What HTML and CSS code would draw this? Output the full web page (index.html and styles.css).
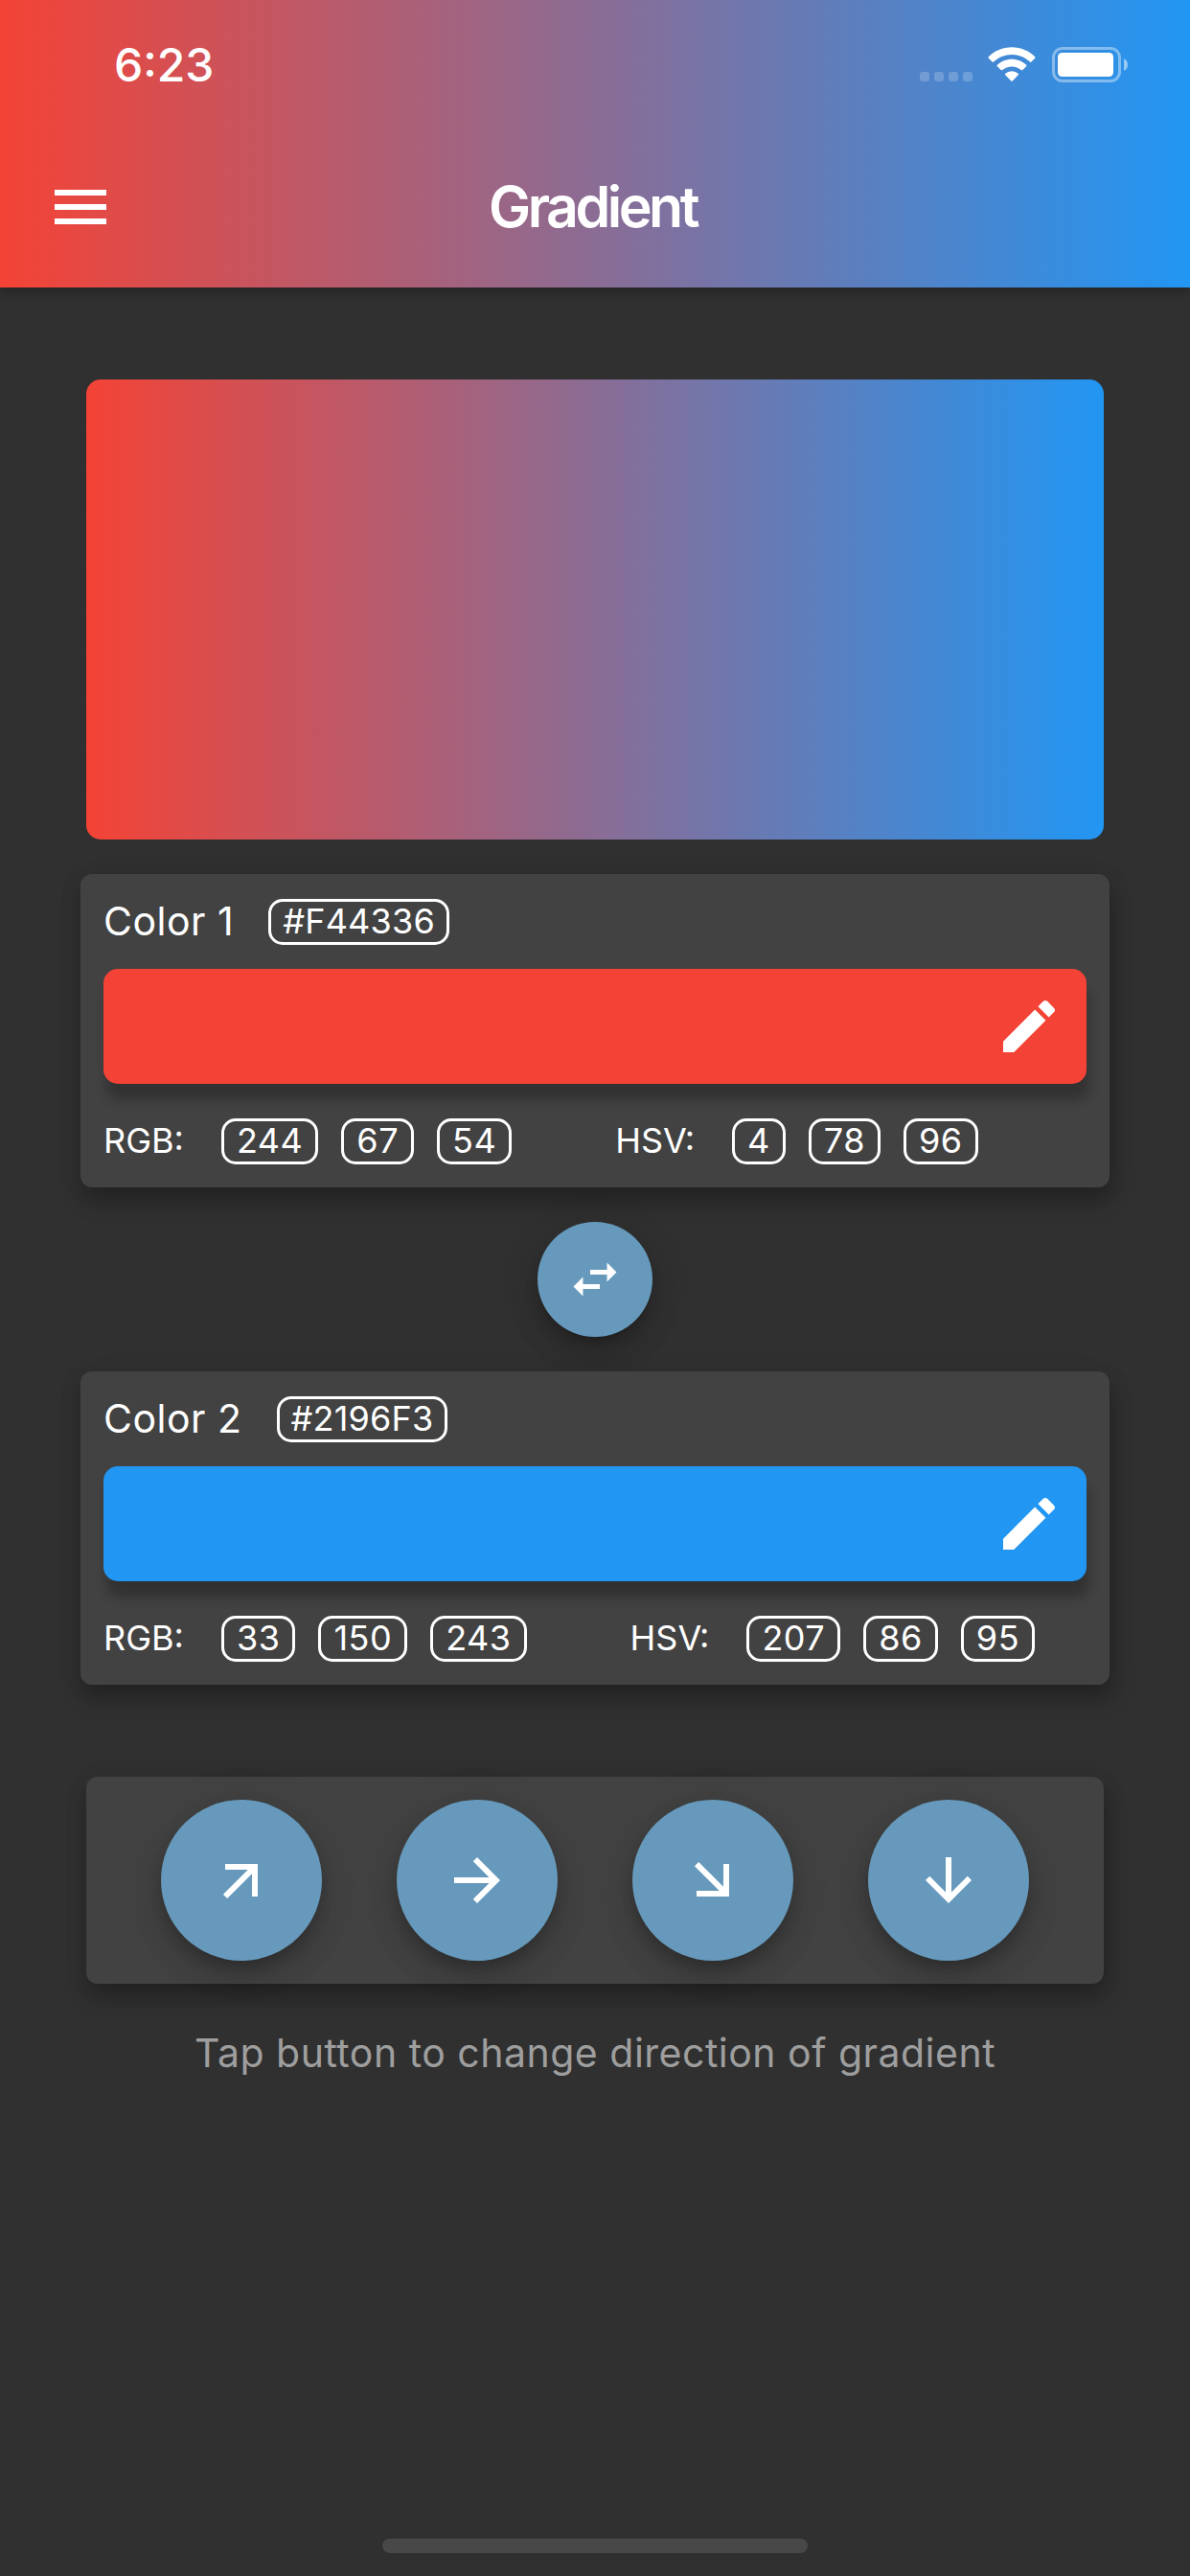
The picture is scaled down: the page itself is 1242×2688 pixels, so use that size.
FILE: index.html
```html
<!DOCTYPE html>
<html lang="en">
<head>
<meta charset="utf-8">
<title>Gradient</title>
<link rel="stylesheet" href="styles.css">
</head>
<body>
<div class="screen">
  <header class="app-header">
    <div class="status-bar">
      <span class="clock">6:23</span>
      <div class="status-icons">
        <div class="signal"><i></i><i></i><i></i><i></i></div>
        <svg class="wifi" viewBox="0 0 50 37" fill="#fff">
          <path d="M25 .3C34.300 .3 43 4 49.200 10.300Q49.900 11 49.200 11.700L45.400 15.600Q44.700 16.200 44 15.600C39 10.800 32.300 8 25 8S11 10.800 6 15.600Q5.300 16.200 4.600 15.600L.8 11.700Q.1 11 .8 10.300C7 4 15.700 .3 25 .3Z"/>
          <path d="M25 12.800C30.900 12.800 36.200 15.100 40.200 18.800Q40.900 19.500 40.200 20.200L36.300 24.100Q35.600 24.700 34.900 24.100C32.200 21.800 28.800 20.400 25 20.400S17.800 21.800 15.100 24.100Q14.400 24.700 13.700 24.100L9.800 20.200Q9.100 19.500 9.800 18.800C13.800 15.100 19.100 12.800 25 12.800Z"/>
          <path d="M25 25.300Q29 25.300 31.700 27.800Q32.400 28.500 31.700 29.200L25.700 35.400Q25 36.100 24.300 35.400L18.300 29.200Q17.600 28.500 18.300 27.800Q21 25.300 25 25.300Z"/>
        </svg>
        <svg class="battery" viewBox="0 0 79 37">
          <rect x="1.500" y="1.500" width="69" height="34" rx="9.500" fill="none" stroke="#fff" stroke-opacity=".4" stroke-width="3"/>
          <rect x="6" y="6" width="58" height="25" rx="4.500" fill="#fff"/>
          <path d="M75 12Q79 14 79 18.500T75 25Z" fill="#fff" fill-opacity=".5"/>
        </svg>
      </div>
    </div>
    <div class="toolbar">
      <svg class="menu-icon" viewBox="0 0 24 24" fill="#fff"><path d="M3 18h18v-2H3v2zm0-5h18v-2H3v2zm0-7v2h18V6H3z"/></svg>
      <h1 class="title">Gradient</h1>
    </div>
  </header>

  <main class="content">
    <div class="preview"></div>

    <section class="card color-card">
      <div class="card-head"><h2 class="color-name">Color 1</h2><span class="pill">#F44336</span></div>
      <div class="swatch swatch-red">
        <svg class="icon" viewBox="0 0 24 24" fill="#fff"><path d="M3 17.250V21h3.750L17.810 9.940l-3.750-3.750L3 17.250zM20.710 7.040c.39-.39.39-1.020 0-1.410l-2.340-2.340c-.39-.39-1.020-.39-1.410 0l-1.830 1.830 3.750 3.750 1.830-1.830z"/></svg>
      </div>
      <div class="values">
        <div class="group"><span class="label">RGB:</span><span class="pill">244</span><span class="pill">67</span><span class="pill">54</span></div>
        <div class="group"><span class="label">HSV:</span><span class="pill">4</span><span class="pill">78</span><span class="pill">96</span></div>
      </div>
    </section>

    <button class="round swap" aria-label="Swap colors">
      <svg viewBox="0 0 24 24" fill="#fff"><path d="M6.990 11L3 15l3.990 4v-3H14v-2H6.990v-3zM21 9l-3.990-4v3H10v2h7.010v3L21 9z"/></svg>
    </button>

    <section class="card color-card">
      <div class="card-head"><h2 class="color-name">Color 2</h2><span class="pill">#2196F3</span></div>
      <div class="swatch swatch-blue">
        <svg class="icon" viewBox="0 0 24 24" fill="#fff"><path d="M3 17.250V21h3.750L17.810 9.940l-3.750-3.750L3 17.250zM20.710 7.040c.39-.39.39-1.020 0-1.410l-2.340-2.340c-.39-.39-1.020-.39-1.410 0l-1.830 1.830 3.750 3.750 1.830-1.830z"/></svg>
      </div>
      <div class="values">
        <div class="group"><span class="label">RGB:</span><span class="pill">33</span><span class="pill">150</span><span class="pill">243</span></div>
        <div class="group"><span class="label">HSV:</span><span class="pill">207</span><span class="pill">86</span><span class="pill">95</span></div>
      </div>
    </section>

    <section class="card directions">
      <button class="round dir" aria-label="Up right"><svg class="icon turn-up" viewBox="0 0 24 24" fill="#fff"><path d="M12 4l-1.410 1.410L16.170 11H4v2h12.170l-5.580 5.590L12 20l8-8z"/></svg></button>
      <button class="round dir" aria-label="Right"><svg class="icon" viewBox="0 0 24 24" fill="#fff"><path d="M12 4l-1.410 1.410L16.170 11H4v2h12.170l-5.580 5.590L12 20l8-8z"/></svg></button>
      <button class="round dir" aria-label="Down right"><svg class="icon turn-down" viewBox="0 0 24 24" fill="#fff"><path d="M12 4l-1.410 1.410L16.170 11H4v2h12.170l-5.580 5.590L12 20l8-8z"/></svg></button>
      <button class="round dir" aria-label="Down"><svg class="icon" viewBox="0 0 24 24" fill="#fff"><path d="M20 12l-1.410-1.410L13 16.170V4h-2v12.170l-5.580-5.590L4 12l8 8 8-8z"/></svg></button>
    </section>

    <p class="hint">Tap button to change direction of gradient</p>
  </main>
  <div class="home-indicator"></div>
</div>
</body>
</html>
```
FILE: styles.css
```css
* { box-sizing: border-box; }
body { margin: 0; background: #303030; color: #fff; font-family: Inter, "Liberation Sans", sans-serif; }
h1, h2, p { margin: 0; font-weight: 400; }
svg { display: block; flex: none; }

.screen { width: 1242px; height: 2688px; display: flex; flex-direction: column; overflow: hidden; }

/* Header */
.app-header {
  height: 300px;
  flex: none;
  background: linear-gradient(90deg, #f44336, #2196f3);
  box-shadow: 0 3px 12px rgba(0, 0, 0, .3);
}
.status-bar { height: 132px; display: flex; justify-content: space-between; padding: 0 65px 0 119px; }
.clock { margin-top: 38px; font-size: 48px; line-height: 60px; font-weight: 550; letter-spacing: 0; }
.status-icons { display: flex; align-items: flex-start; padding-top: 49px; }
.signal { display: flex; gap: 5px; margin: 26px 16px 0 0; }
.signal i { width: 10px; height: 10px; border-radius: 3px; background: rgba(255, 255, 255, .2); }
.wifi { width: 50px; height: 37px; margin-right: 17px; }
.battery { width: 79px; height: 37px; }
.toolbar { height: 168px; display: grid; grid-template-columns: 72px 1fr 72px; align-items: center; padding: 0 48px; }
.menu-icon { width: 72px; height: 72px; }
.title { padding-right: 5px; text-align: center; font-size: 59px; line-height: 72px; font-weight: 580; letter-spacing: -3.5px; }

/* Page body */
.content { flex: 1; display: flex; flex-direction: column; align-items: center; padding-top: 96px; }
.preview { width: 1062px; height: 480px; flex: none; border-radius: 15px; background: linear-gradient(90deg, #f44336, #2196f3); }
.card {
  background: #424242;
  border-radius: 12px;
  box-shadow: 2px 14px 22px rgba(0, 0, 0, .25), 0 3px 24px rgba(0, 0, 0, .08);
}
.color-card { width: 1074px; height: 327px; flex: none; margin-top: 36px; padding: 25px 24px 24px; }
.card-head { display: flex; align-items: center; height: 49px; gap: 36px; }
.color-name { font-size: 41px; line-height: 50px; padding-bottom: 2px; letter-spacing: .5px; }
.swatch {
  height: 120px;
  margin-top: 25px;
  padding-right: 24px;
  display: flex;
  justify-content: flex-end;
  align-items: center;
  border-radius: 15px;
  box-shadow: 3px 17px 12px rgba(0, 0, 0, .25);
}
.swatch-red { background: #f44336; }
.swatch-blue { background: #2196f3; }
.icon { width: 72px; height: 72px; }
.values { display: flex; gap: 108px; margin-top: 36px; height: 48px; }
.group { display: flex; align-items: center; gap: 24px; }
.label { font-size: 36px; line-height: 42px; padding-bottom: 2px; letter-spacing: 0; margin-right: 15px; }
.pill {
  height: 48px;
  padding: 0 12px;
  border: 3px solid #fff;
  border-radius: 15px;
  font-size: 36px;
  line-height: 41px;
  letter-spacing: .2px;
}
.group .pill { padding: 0 13px; letter-spacing: .5px; }

/* Round buttons */
.round {
  display: flex;
  align-items: center;
  justify-content: center;
  flex: none;
  padding: 0;
  border: 0;
  border-radius: 50%;
  background: #6699bb;
  box-shadow: 0 9px 15px -3px rgba(0, 0, 0, .2), 0 18px 30px rgba(0, 0, 0, .14), 0 3px 54px rgba(0, 0, 0, .06);
}
.swap { width: 120px; height: 120px; margin-top: 36px; }
.swap svg { width: 60px; height: 60px; }
.directions { width: 1062px; height: 216px; flex: none; margin-top: 96px; display: flex; justify-content: space-evenly; align-items: center; }
.dir { width: 168px; height: 168px; }
.turn-up { transform: rotate(-45deg); }
.turn-down { transform: rotate(45deg); }

.hint { margin-top: 47px; font-size: 41px; line-height: 50px; color: #9e9e9e; letter-spacing: .5px; white-space: nowrap; }
.home-indicator { flex: none; align-self: center; width: 444px; height: 15px; margin-bottom: 24px; border-radius: 8px; background: #484848; }
```
